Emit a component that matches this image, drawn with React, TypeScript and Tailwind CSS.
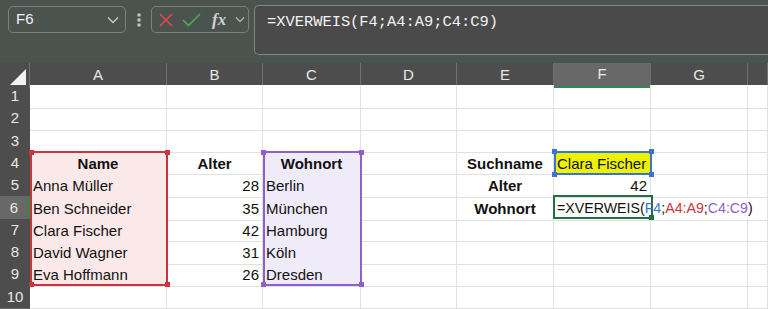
import React from 'react';

// Spreadsheet data: rows 1..10, columns A..H
const cols = ['A', 'B', 'C', 'D', 'E', 'F', 'G', 'H'];
const colClass = 'grid grid-cols-[30px_137px_96px_98px_96px_97px_97px_97px_1fr]';

type Cell = { text?: React.ReactNode; bold?: boolean; align?: 'left' | 'right' | 'center'; bg?: string };

const names = ['Anna Müller', 'Ben Schneider', 'Clara Fischer', 'David Wagner', 'Eva Hoffmann'];
const ages = ['28', '35', '42', '31', '26'];
const towns = ['Berlin', 'München', 'Hamburg', 'Köln', 'Dresden'];

function buildRow(r: number): Cell[] {
  const row: Cell[] = cols.map(() => ({}));
  if (r >= 4 && r <= 9) {
    row[0].bg = 'bg-[#fbe9e9]';
    row[2].bg = 'bg-[#efebf8]';
  }
  if (r === 4) {
    row[0] = { ...row[0], text: 'Name', bold: true, align: 'center' };
    row[1] = { text: 'Alter', bold: true, align: 'center' };
    row[2] = { ...row[2], text: 'Wohnort', bold: true, align: 'center' };
    row[4] = { text: 'Suchname', bold: true, align: 'center' };
    row[5] = { text: 'Clara Fischer', bg: 'bg-[#eef200]' };
  }
  if (r >= 5 && r <= 9) {
    row[0] = { ...row[0], text: names[r - 5] };
    row[1] = { text: ages[r - 5], align: 'right' };
    row[2] = { ...row[2], text: towns[r - 5] };
  }
  if (r === 5) {
    row[4] = { text: 'Alter', bold: true, align: 'center' };
    row[5] = { text: '42', align: 'right' };
  }
  if (r === 6) {
    row[4] = { text: 'Wohnort', bold: true, align: 'center' };
    row[5] = {
      text: (
        <span className="text-[14.2px]">
          =XVERWEIS(<span className="text-[#3b73d1]">F4</span>;<span className="text-[#c9343d]">A4:A9</span>;
          <span className="text-[#8d62c6]">C4:C9</span>)
        </span>
      ),
    };
  }
  return row;
}

function Corner({ pos, color }: { pos: string; color: string }) {
  return <div className={`absolute w-[5px] h-[5px] ${pos} ${color}`} />;
}

export default function App() {
  const rows = Array.from({ length: 10 }, (_, i) => i + 1);

  return (
    <div className="w-[768px] h-[309px] overflow-hidden bg-white font-['Liberation_Sans',Arial,sans-serif]">
      {/* Toolbar with name box and formula bar */}
      <div className="h-[63px] bg-[#4b534f] flex items-start pt-[5px]">
        <div className="ml-[8px] mt-[1px] w-[118px] h-[27px] rounded-[5px] border border-[#7b817e] flex items-center justify-between pl-[7px] pr-[6px]">
          <span className="text-[15px] text-[#f2f2f2]">F6</span>
          <svg width="12" height="8" viewBox="0 0 12 8" fill="none" stroke="#c8c8c8" strokeWidth="1.3">
            <path d="M1 1.5 L6 6.5 L11 1.5" />
          </svg>
        </div>
        <div className="w-[25px] h-[27px] mt-[1px] flex items-center justify-center">
          <svg width="4" height="14" viewBox="0 0 4 14" fill="#c8c8c8">
            <rect x="0.5" y="0.5" width="3" height="3" />
            <rect x="0.5" y="5.5" width="3" height="3" />
            <rect x="0.5" y="10.5" width="3" height="3" />
          </svg>
        </div>
        <div className="w-[98px] h-[27px] mt-[1px] rounded-[5px] border border-[#7b817e] flex items-center pl-[7px] gap-[9px]">
          <svg width="14" height="14" viewBox="0 0 14 14" stroke="#e5474f" strokeWidth="1.6">
            <path d="M1 1 L13 13 M13 1 L1 13" />
          </svg>
          <svg width="19" height="14" viewBox="0 0 19 14" fill="none" stroke="#46ad57" strokeWidth="1.6">
            <path d="M1 7 L6.5 12.5 L18 1" />
          </svg>
          <span className="font-['Liberation_Serif',serif] italic font-bold text-[17px] text-[#d0d0d0] leading-none ml-[2px]">fx</span>
          <svg width="10" height="7" viewBox="0 0 10 7" fill="none" stroke="#bdbdbd" strokeWidth="1.2">
            <path d="M1 1.5 L5 5.5 L9 1.5" />
          </svg>
        </div>
        <div className="ml-[5px] flex-1 h-[50px] rounded-l-[5px] border border-r-0 border-[#858585] bg-[#4a4a4a] pl-[12px] pt-[3px]">
          <span className="font-['Liberation_Mono',monospace] text-[15.4px] text-[#f2f2f2]">=XVERWEIS(F4;A4:A9;C4:C9)</span>
        </div>
      </div>

      {/* Grid */}
      <div className="relative">
        {/* Column header row */}
        <div className={`${colClass} h-[22px] bg-[#4d4d4d]`}>
          <div className="relative border-r border-[#707070]">
            <svg className="absolute right-[3px] bottom-[3px]" width="16" height="16" viewBox="0 0 16 16">
              <path d="M16 0 L16 16 L0 16 Z" fill="#f2f2f2" />
            </svg>
          </div>
          {cols.map((c) => (
            <div
              key={c}
              className={`flex items-center justify-center text-[15px] text-[#e8e8e8] border-r border-[#707070] ${
                c === 'F' ? 'bg-[#686868] border-b-2 border-b-[#2e8b4f]' : ''
              }`}
            >
              {c === 'H' ? '' : c}
            </div>
          ))}
        </div>

        {rows.map((r) => {
          const cells = buildRow(r);
          return (
            <div key={r} className={`${colClass} h-[22.3px]`}>
              <div
                className={`flex items-center justify-center text-[15px] text-[#e8e8e8] border-b border-[#676767] ${
                  r === 6 ? 'bg-[#686868] border-r-2 border-r-[#2e8b4f]' : 'bg-[#4d4d4d]'
                }`}
              >
                {r}
              </div>
              {cells.map((cell, i) => {
                const spill = r === 6 && (i === 5 || i === 6);
                return (
                  <div
                    key={i}
                    className={`flex items-center pt-[2px] px-[3px] text-[15px] text-[#111] whitespace-nowrap border-b border-[#e1e1e1] ${
                      spill ? 'border-r border-r-transparent' : 'border-r'
                    } ${cell.bg ?? ''} ${cell.bold ? 'font-bold' : ''} ${
                      cell.align === 'center' ? 'justify-center' : cell.align === 'right' ? 'justify-end' : 'justify-start'
                    } ${r === 6 && i === 5 ? 'relative z-10 overflow-visible' : 'overflow-hidden'}`}
                  >
                    {cell.text}
                  </div>
                );
              })}
            </div>
          );
        })}

        {/* Range highlights */}
        <div className="absolute left-[30px] top-[88px] w-[138px] h-[135px] border-2 border-[#c9343d] pointer-events-none">
          <Corner pos="-left-[3px] -top-[3px]" color="bg-[#c9343d]" />
          <Corner pos="-right-[4px] -top-[3px]" color="bg-[#c9343d]" />
          <Corner pos="-left-[3px] -bottom-[3px]" color="bg-[#c9343d]" />
          <Corner pos="-right-[4px] -bottom-[3px]" color="bg-[#c9343d]" />
        </div>
        <div className="absolute left-[263px] top-[88px] w-[99px] h-[135px] border-2 border-[#8d62c6] pointer-events-none">
          <Corner pos="-left-[4px] -top-[3px]" color="bg-[#8d62c6]" />
          <Corner pos="-right-[4px] -top-[3px]" color="bg-[#8d62c6]" />
          <Corner pos="-left-[4px] -bottom-[3px]" color="bg-[#8d62c6]" />
          <Corner pos="-right-[4px] -bottom-[3px]" color="bg-[#8d62c6]" />
        </div>
        <div className="absolute left-[554px] top-[88px] w-[98px] h-[24px] border-2 border-[#3b73d1] pointer-events-none">
          <Corner pos="-left-[4px] -top-[4px]" color="bg-[#3b73d1]" />
          <Corner pos="-right-[4px] -top-[4px]" color="bg-[#3b73d1]" />
          <Corner pos="-left-[4px] -bottom-[4px]" color="bg-[#3b73d1]" />
          <Corner pos="-right-[4px] -bottom-[4px]" color="bg-[#3b73d1]" />
        </div>
        <div className="absolute left-[553px] top-[132px] w-[100px] h-[24px] border-2 border-[#1f7145] pointer-events-none">
          <Corner pos="-right-[3px] -bottom-[3px]" color="bg-[#1f7145]" />
        </div>
      </div>
    </div>
  );
}
